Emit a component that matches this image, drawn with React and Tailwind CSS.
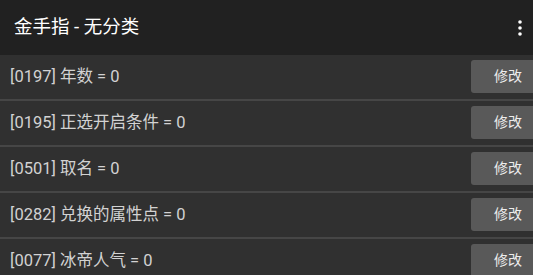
import React from 'react';

const items = [
  { id: '0197', name: '年数', value: 0 },
  { id: '0195', name: '正选开启条件', value: 0 },
  { id: '0501', name: '取名', value: 0 },
  { id: '0282', name: '兑换的属性点', value: 0 },
  { id: '0077', name: '冰帝人气', value: 0 },
];

export default function App() {
  return (
    <div className="w-[533px] h-[275px] overflow-hidden bg-[#303030]" style={{ fontFamily: 'Roboto, "Noto Sans CJK SC", sans-serif' }}>
      <div className="h-[55px] bg-[#212121] flex items-center justify-between pl-[14px] pr-[10px]">
        <h1 className="text-[18.5px] text-white">金手指 - 无分类</h1>
        <svg width="4" height="16" viewBox="0 0 4 16" className="mr-[1px]">
          <circle cx="2" cy="2" r="1.8" fill="#fff" />
          <circle cx="2" cy="8" r="1.8" fill="#fff" />
          <circle cx="2" cy="14" r="1.8" fill="#fff" />
        </svg>
      </div>
      <div>
        {items.map(it => (
          <div key={it.id} className="h-[46px] border-b-2 border-[#464646] flex items-start justify-between">
            <span className="text-[16.5px] text-[#d2d2d2] pl-[10px] h-[44px] flex items-center">[{it.id}] {it.name} = {it.value}</span>
            <button className="mt-[5px] w-[62px] h-[33px] bg-[#595959] rounded-l-[3px] text-[14px] text-[#ececec] flex items-center justify-center pl-[12px]">修改</button>
          </div>
        ))}
      </div>
    </div>
  );
}
